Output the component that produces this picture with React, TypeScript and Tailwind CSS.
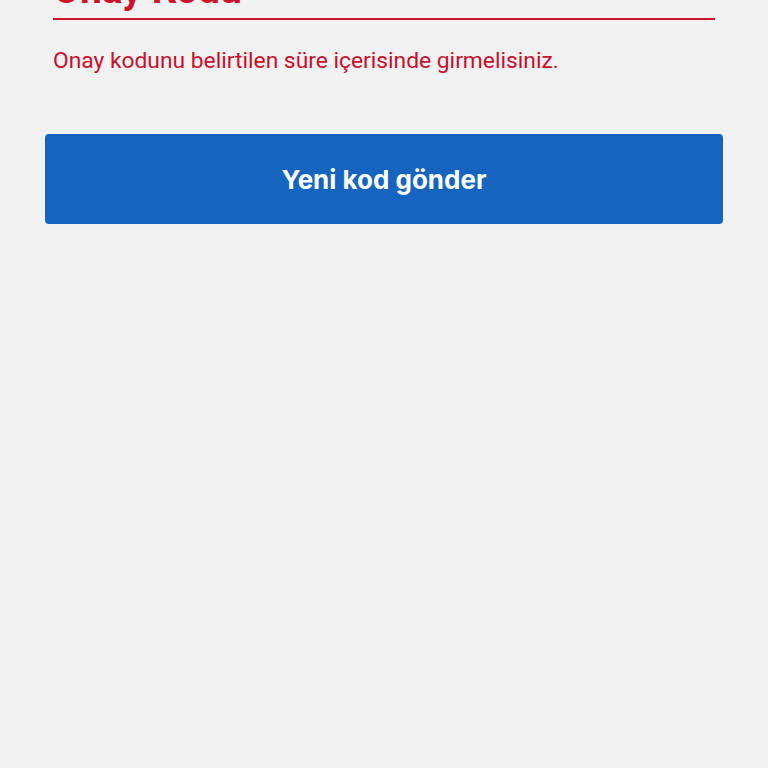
export default function App() {
  return (
    <div className="min-h-screen bg-[#f2f2f2] overflow-hidden font-['Roboto',sans-serif]">
      <div className="mx-[53px] -mt-[32px] border-b-2 border-[#d0112b] pb-[6px]">
        <h1 className="text-[39px] font-bold leading-[44px] text-[#d0112b]">Onay Kodu</h1>
      </div>
      <p className="mx-[53px] mt-[26px] text-[22.8px] leading-[30px] text-[#c8102e]">
        Onay kodunu belirtilen süre içerisinde girmelisiniz.
      </p>
      <div className="mx-[45px] mt-[58px]">
        <button className="flex h-[90px] w-full items-center justify-center rounded-[4px] bg-[#1565c0] font-['Inter',sans-serif] text-[26px] font-bold text-white">
          Yeni kod gönder
        </button>
      </div>
    </div>
  );
}
